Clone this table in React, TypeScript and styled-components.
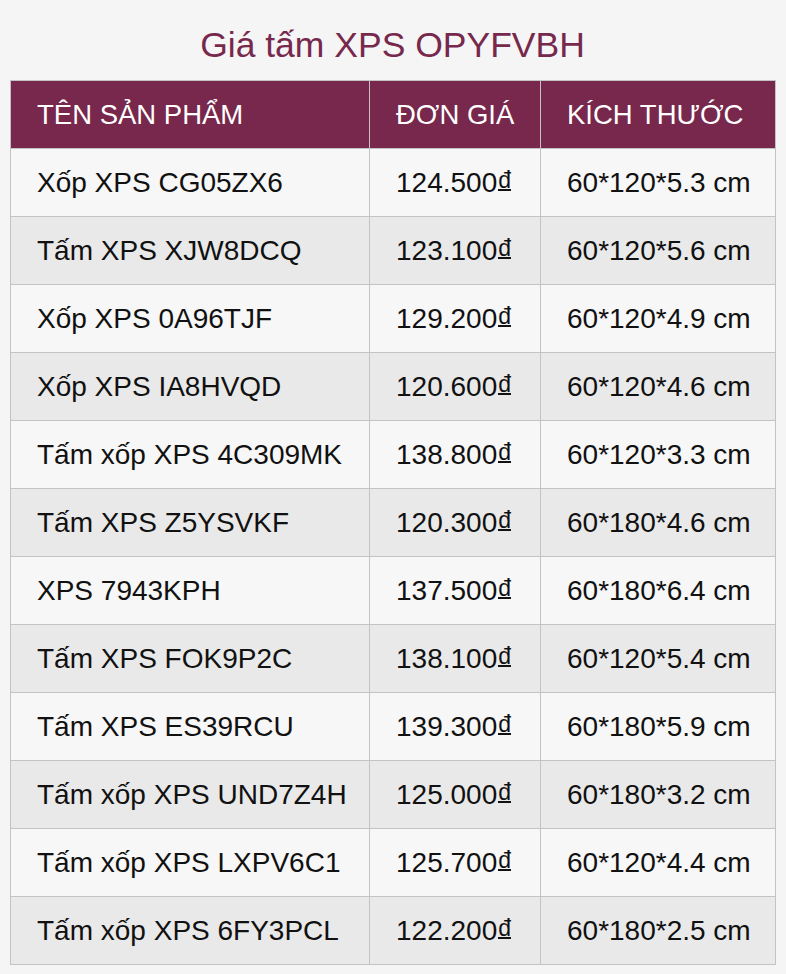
import React from 'react';
import styled, { createGlobalStyle } from 'styled-components';

const GlobalStyle = createGlobalStyle`
  html, body {
    margin: 0;
    padding: 0;
    background: #f5f5f5;
    font-family: "Liberation Sans", Arial, sans-serif;
  }
`;

interface Item {
  name: string;
  price: string;
  size: string;
}

const items: Item[] = [
  { name: 'Xốp XPS CG05ZX6', price: '124.500', size: '60*120*5.3 cm' },
  { name: 'Tấm XPS XJW8DCQ', price: '123.100', size: '60*120*5.6 cm' },
  { name: 'Xốp XPS 0A96TJF', price: '129.200', size: '60*120*4.9 cm' },
  { name: 'Xốp XPS IA8HVQD', price: '120.600', size: '60*120*4.6 cm' },
  { name: 'Tấm xốp XPS 4C309MK', price: '138.800', size: '60*120*3.3 cm' },
  { name: 'Tấm XPS Z5YSVKF', price: '120.300', size: '60*180*4.6 cm' },
  { name: 'XPS 7943KPH', price: '137.500', size: '60*180*6.4 cm' },
  { name: 'Tấm XPS FOK9P2C', price: '138.100', size: '60*120*5.4 cm' },
  { name: 'Tấm XPS ES39RCU', price: '139.300', size: '60*180*5.9 cm' },
  { name: 'Tấm xốp XPS UND7Z4H', price: '125.000', size: '60*180*3.2 cm' },
  { name: 'Tấm xốp XPS LXPV6C1', price: '125.700', size: '60*120*4.4 cm' },
  { name: 'Tấm xốp XPS 6FY3PCL', price: '122.200', size: '60*180*2.5 cm' },
];

const App: React.FC = () => {
  return (
    <Page>
      <GlobalStyle />
      <Title>Giá tấm XPS OPYFVBH</Title>
      <Table>
        <colgroup>
          <col style={{ width: 359 }} />
          <col style={{ width: 171 }} />
          <col style={{ width: 235 }} />
        </colgroup>
        <thead>
          <tr>
            <Th>TÊN SẢN PHẨM</Th>
            <Th>ĐƠN GIÁ</Th>
            <Th>KÍCH THƯỚC</Th>
          </tr>
        </thead>
        <tbody>
          {items.map((it, i) => (
            <Row key={it.name} $even={i % 2 === 1}>
              <Td>{it.name}</Td>
              <Td>
                {it.price}
                <Dong>đ</Dong>
              </Td>
              <Td>{it.size}</Td>
            </Row>
          ))}
        </tbody>
      </Table>
    </Page>
  );
};

export default App;

const Page = styled.div`
  padding: 25px 11px 10px 10px;
`;

const Title = styled.h1`
  margin: 0 0 15px;
  font-size: 35.5px;
  line-height: 40px;
  font-weight: 400;
  text-align: center;
  color: #77284d;
`;

const Table = styled.table`
  width: 765px;
  border-collapse: collapse;
  table-layout: fixed;
  border: 1px solid #c3c3c3;
`;

const Th = styled.th`
  height: 68px;
  box-sizing: border-box;
  padding: 0 26px;
  background: #77284c;
  color: #ffffff;
  font-size: 27.5px;
  font-weight: 400;
  text-align: left;
  border: 1px solid #c3c3c3;
  white-space: nowrap;
`;

const Row = styled.tr<{ $even?: boolean }>`
  background: ${(p) => (p.$even ? '#e9e9e9' : '#f7f7f7')};
`;

const Td = styled.td`
  height: 68px;
  box-sizing: border-box;
  padding: 0 26px;
  font-size: 28px;
  color: #111111;
  border: 1px solid #c3c3c3;
  white-space: nowrap;
`;

const Dong = styled.span`
  display: inline-block;
  margin-left: 1px;
  font-size: 23px;
  line-height: 18px;
  border-bottom: 2px solid currentColor;
  vertical-align: 4px;
`;
